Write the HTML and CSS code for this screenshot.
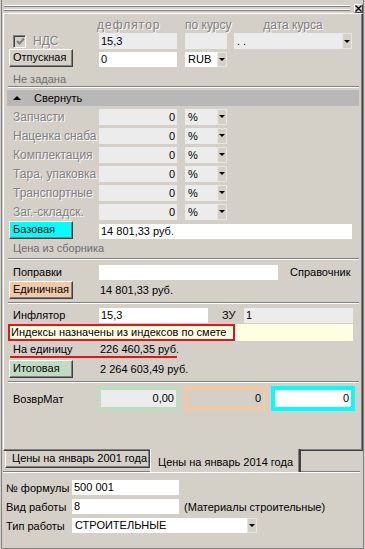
FILE: index.html
```html
<!DOCTYPE html>
<html><head><meta charset="utf-8"><title>Цены</title><link rel="stylesheet" href="styles.css"></head>
<body>
<div class="win">
  <div class="title">
    <div class="grip"><span></span><span></span></div>
    <div class="close"><svg width="7" height="7" viewBox="0 0 7 7"><path d="M0.5 0.5L6.5 6.5M6.5 0.5L0.5 6.5" stroke="#000" stroke-width="1.3"/></svg></div>
  </div>
  <div class="sheet">
    <div class="row r-head">
      <div class="c1"></div>
      <div class="c2 dis hl">дефлятор</div>
      <div class="c3 dis hc">по курсу</div>
      <div class="c4 dis hc">дата курса</div>
    </div>
    <div class="row r1">
      <div class="c1 chkcell"><span class="chk"><svg width="9" height="9" viewBox="0 0 9 9"><path d="M1 4L3.5 6.5L8 1.5" fill="none" stroke="#808080" stroke-width="2"/></svg></span><span class="dis">НДС</span></div>
      <div class="c2 field gray h16">15,3</div>
      <div class="c3 field gray h16"></div>
      <div class="c4 combo gray h16"><span class="cv">. .</span><span class="dd"></span></div>
    </div>
    <div class="row r2">
      <div class="c1"><span class="btn">Отпускная</span></div>
      <div class="c2 field white">0</div>
      <div class="c3 combo white"><span class="cv">RUB</span><span class="dd"></span></div>
    </div>
    <div class="row r-note"><span class="lbl muted">Не задана</span></div>
    <div class="sep s1"></div>
    <div class="bar"><span class="tri"></span><span>Свернуть</span></div>
    <div class="row rc"><div class="c1 lbl dis">Запчасти</div><div class="c2 field gray h16 ra">0</div><div class="c3 combo gray h16"><span class="cv">%</span><span class="dd"></span></div></div>
    <div class="row rc"><div class="c1 lbl dis">Наценка снаба</div><div class="c2 field gray h16 ra">0</div><div class="c3 combo gray h16"><span class="cv">%</span><span class="dd"></span></div></div>
    <div class="row rc"><div class="c1 lbl dis">Комплектация</div><div class="c2 field gray h16 ra">0</div><div class="c3 combo gray h16"><span class="cv">%</span><span class="dd"></span></div></div>
    <div class="row rc"><div class="c1 lbl dis">Тара, упаковка</div><div class="c2 field gray h16 ra">0</div><div class="c3 combo gray h16"><span class="cv">%</span><span class="dd"></span></div></div>
    <div class="row rc"><div class="c1 lbl dis">Транспортные</div><div class="c2 field gray h16 ra">0</div><div class="c3 combo gray h16"><span class="cv">%</span><span class="dd"></span></div></div>
    <div class="row rc"><div class="c1 lbl dis">Заг.-складск.</div><div class="c2 field gray h16 ra">0</div><div class="c3 combo gray h16"><span class="cv">%</span><span class="dd"></span></div></div>
    <div class="row rb">
      <div class="c1"><span class="btn cyan">Базовая</span></div>
      <div class="field white wide">14 801,33 руб.</div>
    </div>
    <div class="row r-src"><span class="lbl muted">Цена из сборника</span></div>
    <div class="sep s2"></div>
    <div class="row r-pop">
      <div class="c1 lbl">Поправки</div>
      <div class="field white popr"></div>
      <div class="sprav">Справочник</div>
    </div>
    <div class="row rb r-ed">
      <div class="c1"><span class="btn peach">Единичная</span></div>
      <div class="val">14 801,33 руб.</div>
    </div>
    <div class="sep s3"></div>
    <div class="row r-inf">
      <div class="c1 lbl">Инфлятор</div>
      <div class="field white infl">15,3</div>
      <div class="zu">ЗУ</div>
      <div class="field gray zuf">1</div>
    </div>
    <div class="note"><div class="redbox">Индексы назначены из индексов по смете</div></div>
    <div class="row r-unit">
      <div class="c1 lbl">На единицу</div>
      <div class="val">226 460,35 руб.</div>
    </div>
    <div class="redline"></div>
    <div class="row rb r-tot">
      <div class="c1"><span class="btn green">Итоговая</span></div>
      <div class="val">2 264 603,49 руб.</div>
    </div>
    <div class="sep s4"></div>
    <div class="row r-vm">
      <div class="c1 lbl">ВозврМат</div>
      <div class="box bgreen">0,00</div>
      <div class="box bpeach">0</div>
      <div class="box bcyan">0</div>
    </div>
  </div>
  <div class="tabs">
    <div class="tab">Цены на январь 2001 года</div>
    <div class="tab active">Цены на январь 2014 года</div>
  </div>
  <div class="etch"></div>
  <div class="form">
    <div class="frow"><div class="fl">№ формулы</div><div class="field white fin">500 001</div></div>
    <div class="frow"><div class="fl">Вид работы</div><div class="field white fin">8</div><div class="fnote">(Материалы строительные)</div></div>
    <div class="frow"><div class="fl">Тип работы</div><div class="combo white fcombo"><span class="cv">СТРОИТЕЛЬНЫЕ</span><span class="dd"></span></div></div>
  </div>
</div>
</body></html>
```
FILE: styles.css
```css
*{box-sizing:border-box}
html,body{margin:0;padding:0;background:#d4d0c8}
body{font:11px "Liberation Sans",Arial,sans-serif;color:#000;width:365px;height:549px;overflow:hidden}
.win{margin-left:1px;width:363px;height:549px;border:1px solid #808080;border-top:0}
.title{height:13px;display:flex;align-items:flex-start}
.grip{margin:5px 0 0 2px;width:346px}
.grip span{display:block;height:2px;border-top:1px solid #fff;border-bottom:1px solid #808080;margin-bottom:2px}
.close{margin:4px 0 0 4px;width:9px;height:9px;border:1px solid;border-color:#fff #404040 #404040 #fff;display:flex;align-items:center;justify-content:center;background:#d4d0c8}
.close svg{display:block}
.sheet{margin-left:1px;width:360px;height:438px;border:1px solid;border-color:#fff #404040 #404040 #fff;box-shadow:inset -1px -1px #808080;padding:1px 3px}
.row{display:flex;align-items:center}
.c1{width:92px;flex:none}
.c2{width:78px;flex:none}
.c3{width:42px;flex:none;margin-left:8px}
.c4{width:118px;flex:none;margin-left:7px}
.lbl{padding-left:6px;white-space:nowrap}
.dis{color:#808080;text-shadow:1px 1px 0 #fff;white-space:nowrap;font-size:12px}
.muted{color:#6d6d6d}
.hl{text-indent:-2px;letter-spacing:1px}
.hc{text-align:center}
.r-head{height:18px;padding-top:1px}
.r1{height:16px}
.r2{height:18px;align-items:flex-end}
.r-note{height:19px;padding-top:4px}
.chkcell{display:flex;align-items:center;padding-left:6px}
.chk{width:13px;height:13px;border:1px solid;border-color:#808080 #fff #fff #808080;box-shadow:inset 1px 1px #404040;background:#d4d0c8;display:flex;align-items:center;justify-content:center;margin-right:7px}
.chk svg{display:block;margin:1px 0 0 1px}
.field{height:15px;line-height:15px;padding:0 2px;white-space:nowrap;overflow:hidden}
.h16{height:16px;line-height:16px}
.gray{background:#ececec}
.white{background:#fff}
.ra{text-align:right}
.combo{height:15px;display:flex;align-items:stretch;line-height:15px}
.combo.h16{height:16px;line-height:16px}
.cv{flex:1;padding-left:3px;white-space:nowrap;overflow:hidden}
.dd{width:10px;flex:none;background:#d4d0c8;border:1px solid #e8e6e2;display:flex;align-items:center;justify-content:center}
.dd::after{content:"";border-left:3px solid transparent;border-right:3px solid transparent;border-top:3px solid #000}
.btn{display:block;margin-left:2px;width:64px;height:18px;line-height:14px;padding-left:3px;border:1px solid;border-color:#fff #404040 #404040 #fff;box-shadow:inset -1px -1px #808080;background:#d4d0c8;white-space:nowrap}
.btn.cyan{background:#00ffff}
.btn.peach{background:#f0caa6}
.btn.green{background:#c0dcc0}
.sep{height:2px;border-top:1px solid #808080;border-bottom:1px solid #fff;margin-left:1px}
.s1{margin-top:0}
.bar{margin-top:2px;height:16px;background:#b8b8b8;display:flex;align-items:center}
.tri{width:0;height:0;border-left:4px solid transparent;border-right:4px solid transparent;border-bottom:4px solid #000;margin:0 13px 0 6px}
.rc{height:19px}
.bar + .rc{margin-top:1px}
.rb{height:18px;align-items:flex-end}
.wide{width:253px}
.r-src{height:18px}
.s2{margin-top:1px}
.r-pop{height:20px;align-items:flex-end}
.r-pop .lbl{line-height:15px}
.popr{width:179px}
.sprav{margin-left:12px;line-height:15px;white-space:nowrap}
.r-ed{margin-top:1px;align-items:center}
.val{padding-left:1px;white-space:nowrap}
.s3{margin-top:3px}
.r-inf{height:19px;align-items:flex-end}
.r-inf .lbl,.zu{line-height:15px}
.infl{width:109px}
.zu{margin-left:14px;width:21px}
.zuf{width:109px;margin-left:1px}
.note{margin:1px 0 0 1px;width:345px;height:17px;background:#ffffe1}
.redbox{width:227px;height:17px;border:2px solid #e3141b;line-height:13px;padding-left:1px;white-space:nowrap;overflow:hidden}
.r-unit{height:15px}
.redline{margin-left:3px;width:167px;height:2px;background:#e3141b}
.r-tot{margin-top:2px;align-items:center}
.s4{margin-top:3px}
.r-vm{margin-top:3px;height:25px}
.box{height:25px;border:4px solid;text-align:right;padding-right:2px;line-height:17px}
.bgreen{margin-left:-2px;width:83px;border-color:#c0dcc0;background:#ececec}
.bpeach{margin-left:4px;width:83px;border-color:#f0caa6;background:#d4d0c8}
.bcyan{margin-left:4px;width:84px;border-color:#00ffff;background:#fff}
.tabs{display:flex;height:20px;align-items:flex-start}
.tab{height:17px;line-height:15px;white-space:nowrap;border-left:1px solid #fff;border-right:1px solid #404040;border-bottom:1px solid #404040;box-shadow:inset -1px -1px #808080;background:#d4d0c8}
.tab:first-child{margin-left:3px;width:145px;padding-left:6px}
.tab.active{position:relative;margin-top:-2px;width:151px;height:23px;padding-left:7px;line-height:26px;border-right:2px solid #404040;border-bottom:0;box-shadow:inset -1px 0 #808080}
.etch{height:2px;margin-left:1px;width:357px;border-top:1px solid #808080;border-bottom:1px solid #fff;margin-top:0}
.form{padding:7px 0 0 4px}
.frow{display:flex;align-items:center;height:15px;margin-bottom:4px}
.fl{width:66px;white-space:nowrap}
.fin{width:107px;line-height:15px}
.fnote{margin-left:5px;white-space:nowrap}
.fcombo{width:185px}
```
